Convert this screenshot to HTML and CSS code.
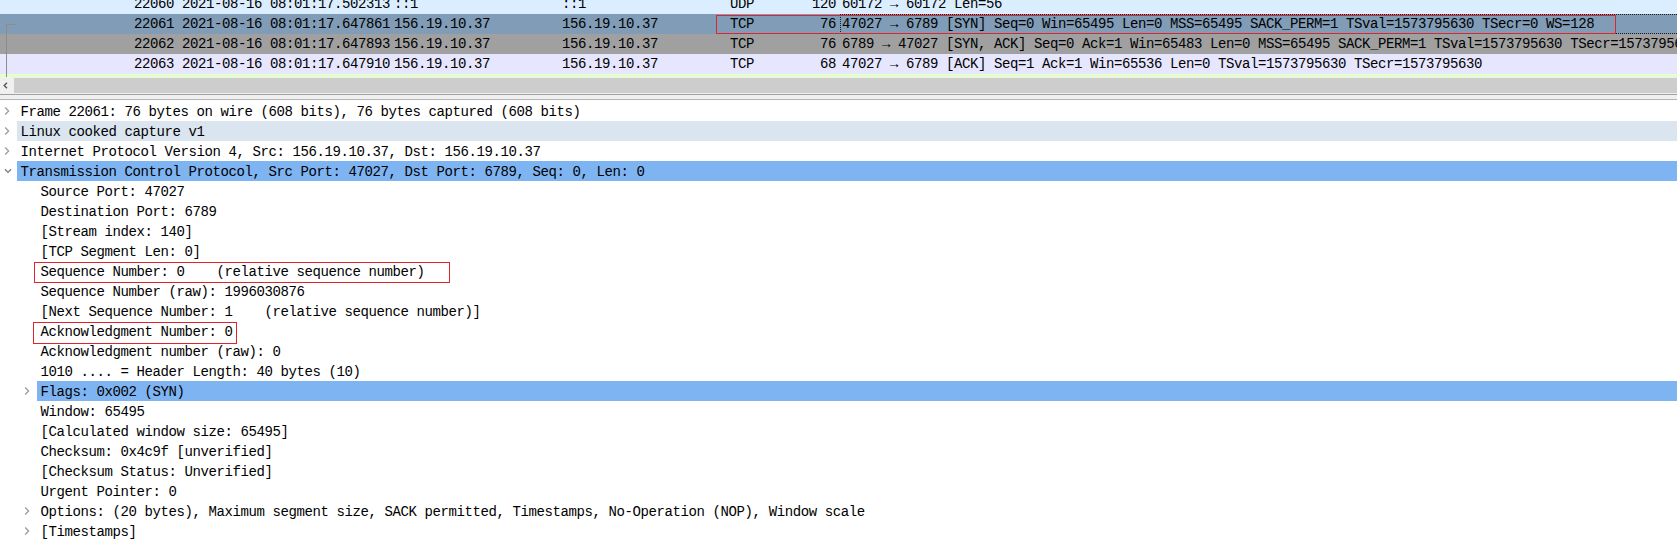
FILE: index.html
```html
<!DOCTYPE html>
<html>
<head>
<meta charset="utf-8">
<link rel="stylesheet" href="styles.css">
</head>
<body>
<div class="app">
  <div class="plist">
    <div class="prow udp first"><span class="c no">22060</span><span class="c time">2021-08-16 08:01:17.502313</span><span class="c src">::1</span><span class="c dst">::1</span><span class="c proto">UDP</span><span class="c len">120</span><span class="c info">60172 → 60172 Len=56</span></div>
    <div class="prow sel"><span class="c no">22061</span><span class="c time">2021-08-16 08:01:17.647861</span><span class="c src">156.19.10.37</span><span class="c dst">156.19.10.37</span><span class="c proto">TCP</span><span class="c len">76</span><span class="c info">47027 → 6789 [SYN] Seq=0 Win=65495 Len=0 MSS=65495 SACK_PERM=1 TSval=1573795630 TSecr=0 WS=128</span></div>
    <div class="prow syn"><span class="c no">22062</span><span class="c time">2021-08-16 08:01:17.647893</span><span class="c src">156.19.10.37</span><span class="c dst">156.19.10.37</span><span class="c proto">TCP</span><span class="c len">76</span><span class="c info">6789 → 47027 [SYN, ACK] Seq=0 Ack=1 Win=65483 Len=0 MSS=65495 SACK_PERM=1 TSval=1573795630 TSecr=1573795630 WS=128</span></div>
    <div class="prow tcp"><span class="c no">22063</span><span class="c time">2021-08-16 08:01:17.647910</span><span class="c src">156.19.10.37</span><span class="c dst">156.19.10.37</span><span class="c proto">TCP</span><span class="c len">68</span><span class="c info">47027 → 6789 [ACK] Seq=1 Ack=1 Win=65536 Len=0 TSval=1573795630 TSecr=1573795630</span></div>
    <div class="prow next"></div>
    <div class="bracket"></div>
    <div class="mark mark-top"></div>
  </div>
  <div class="hscroll">
    <div class="sb-btn"><svg width="5" height="7" viewBox="0 0 5 7"><path d="M4 0.8 L1.2 3.5 L4 6.2" fill="none" stroke="#555" stroke-width="1.4"/></svg></div>
    <div class="sb-thumb"></div>
  </div>
  <div class="splitter"></div>
  <div class="tree">
    <div class="trow l0"><span class="exp"><svg class="chev" width="6" height="10" viewBox="0 0 6 10"><path d="M1.2 1.5 L4.6 5 L1.2 8.5" fill="none" stroke="#9c9c9c" stroke-width="1.3"/></svg></span><span class="lbl">Frame 22061: 76 bytes on wire (608 bits), 76 bytes captured (608 bits)</span></div>
    <div class="trow l0 hover"><span class="exp"><svg class="chev" width="6" height="10" viewBox="0 0 6 10"><path d="M1.2 1.5 L4.6 5 L1.2 8.5" fill="none" stroke="#9c9c9c" stroke-width="1.3"/></svg></span><span class="lbl">Linux cooked capture v1</span></div>
    <div class="trow l0"><span class="exp"><svg class="chev" width="6" height="10" viewBox="0 0 6 10"><path d="M1.2 1.5 L4.6 5 L1.2 8.5" fill="none" stroke="#9c9c9c" stroke-width="1.3"/></svg></span><span class="lbl">Internet Protocol Version 4, Src: 156.19.10.37, Dst: 156.19.10.37</span></div>
    <div class="trow l0 hl"><span class="exp"><svg class="chev" width="8" height="6" viewBox="0 0 8 6"><path d="M1 1.2 L4 4.4 L7 1.2" fill="none" stroke="#7a7a7a" stroke-width="1.3"/></svg></span><span class="lbl">Transmission Control Protocol, Src Port: 47027, Dst Port: 6789, Seq: 0, Len: 0</span></div>
    <div class="trow l1"><span class="exp"></span><span class="lbl">Source Port: 47027</span></div>
    <div class="trow l1"><span class="exp"></span><span class="lbl">Destination Port: 6789</span></div>
    <div class="trow l1"><span class="exp"></span><span class="lbl">[Stream index: 140]</span></div>
    <div class="trow l1"><span class="exp"></span><span class="lbl">[TCP Segment Len: 0]</span></div>
    <div class="trow l1"><span class="exp"></span><span class="lbl">Sequence Number: 0    (relative sequence number)</span></div>
    <div class="trow l1"><span class="exp"></span><span class="lbl">Sequence Number (raw): 1996030876</span></div>
    <div class="trow l1"><span class="exp"></span><span class="lbl">[Next Sequence Number: 1    (relative sequence number)]</span></div>
    <div class="trow l1"><span class="exp"></span><span class="lbl">Acknowledgment Number: 0</span></div>
    <div class="trow l1"><span class="exp"></span><span class="lbl">Acknowledgment number (raw): 0</span></div>
    <div class="trow l1"><span class="exp"></span><span class="lbl">1010 .... = Header Length: 40 bytes (10)</span></div>
    <div class="trow l1 hl"><span class="exp"><svg class="chev" width="6" height="10" viewBox="0 0 6 10"><path d="M1.2 1.5 L4.6 5 L1.2 8.5" fill="none" stroke="#9c9c9c" stroke-width="1.3"/></svg></span><span class="lbl">Flags: 0x002 (SYN)</span></div>
    <div class="trow l1"><span class="exp"></span><span class="lbl">Window: 65495</span></div>
    <div class="trow l1"><span class="exp"></span><span class="lbl">[Calculated window size: 65495]</span></div>
    <div class="trow l1"><span class="exp"></span><span class="lbl">Checksum: 0x4c9f [unverified]</span></div>
    <div class="trow l1"><span class="exp"></span><span class="lbl">[Checksum Status: Unverified]</span></div>
    <div class="trow l1"><span class="exp"></span><span class="lbl">Urgent Pointer: 0</span></div>
    <div class="trow l1"><span class="exp"><svg class="chev" width="6" height="10" viewBox="0 0 6 10"><path d="M1.2 1.5 L4.6 5 L1.2 8.5" fill="none" stroke="#9c9c9c" stroke-width="1.3"/></svg></span><span class="lbl">Options: (20 bytes), Maximum segment size, SACK permitted, Timestamps, No-Operation (NOP), Window scale</span></div>
    <div class="trow l1"><span class="exp"><svg class="chev" width="6" height="10" viewBox="0 0 6 10"><path d="M1.2 1.5 L4.6 5 L1.2 8.5" fill="none" stroke="#9c9c9c" stroke-width="1.3"/></svg></span><span class="lbl">[Timestamps]</span></div>
    <div class="mark mark-seq"></div>
    <div class="mark mark-ack"></div>
  </div>
</div>
</body>
</html>
```

FILE: styles.css
```css
* { box-sizing: border-box; }
html, body { margin: 0; padding: 0; background: #fff; }
body {
  width: 1677px;
  height: 558px;
  overflow: hidden;
  font-family: "Liberation Mono", "DejaVu Sans Mono", monospace;
  font-size: 14px;
  letter-spacing: -0.4px;
  color: #000;
}
.app { display: flex; flex-direction: column; height: 558px; }

/* packet list */
.plist {
  position: relative;
  height: 77px;
  flex: none;
  overflow: hidden;
  display: flex;
  flex-direction: column;
}
.prow {
  display: flex;
  flex: none;
  height: 20px;
  line-height: 20px;
  white-space: pre;
}
.prow.first { margin-top: -6px; }
.udp { background: #daeeff; }
.sel { background: #819cb6; }
.syn { background: #a0a0a0; }
.tcp { background: #e7e6ff; }
.next { background: #e4ffc7; }
.c { flex: none; overflow: hidden; }
.no { width: 178px; text-align: right; padding-right: 4px; }
.time { width: 212px; padding-left: 4px; }
.src { width: 168px; padding-left: 4px; }
.dst { width: 168px; padding-left: 4px; }
.proto { width: 80px; padding-left: 4px; }
.len { width: 34px; text-align: right; padding-right: 4px; }
.info { flex: 1; padding-left: 2px; position: relative; }
.sel .info::after {
  content: "";
  position: absolute;
  left: 0; top: 0; right: -2px; bottom: 0;
  border: 1px dotted #1a1a1a;
  border-right: none;
}
.bracket {
  position: absolute;
  left: 6px;
  top: 24px;
  width: 10px;
  height: 70px;
  border-left: 1px solid #8c8c8c;
  border-top: 1px solid #8c8c8c;
}
.mark {
  position: absolute;
  border: 1px solid #e0242c;
}
.mark-top { left: 716px; top: 15px; width: 900px; height: 19px; }

/* horizontal scrollbar */
.hscroll {
  height: 17px;
  flex: none;
  display: flex;
  background: #f0f0f0;
}
.sb-btn {
  width: 14px;
  flex: none;
  display: flex;
  align-items: center;
  padding-left: 3px;
  padding-bottom: 1px;
}
.sb-thumb {
  flex: 1;
  margin: 1px 0;
  background: #cdcdcd;
}
.splitter {
  height: 6px;
  flex: none;
  background: #f0f0f0;
  border-top: 1px solid #a0a0a0;
  border-bottom: 1px solid #b4b4b4;
}

/* details tree */
.tree {
  position: relative;
  flex: 1;
  padding-top: 1px;
  background: #fff;
}
.trow {
  display: flex;
  height: 20px;
  line-height: 20px;
  white-space: pre;
}
.l1 { padding-left: 20px; }
.exp {
  width: 17px;
  flex: none;
  display: flex;
  align-items: center;
  padding-left: 4px;
}
.lbl { flex: 1; padding-left: 3.5px; padding-top: 1px; height: 20px; }
.hl .lbl { background: #7fb4f2; }
.hover .lbl { background: #dae5f0; }
.mark-seq { left: 34px; top: 162px; width: 416px; height: 21px; }
.mark-ack { left: 33px; top: 222px; width: 204px; height: 22px; }
```
